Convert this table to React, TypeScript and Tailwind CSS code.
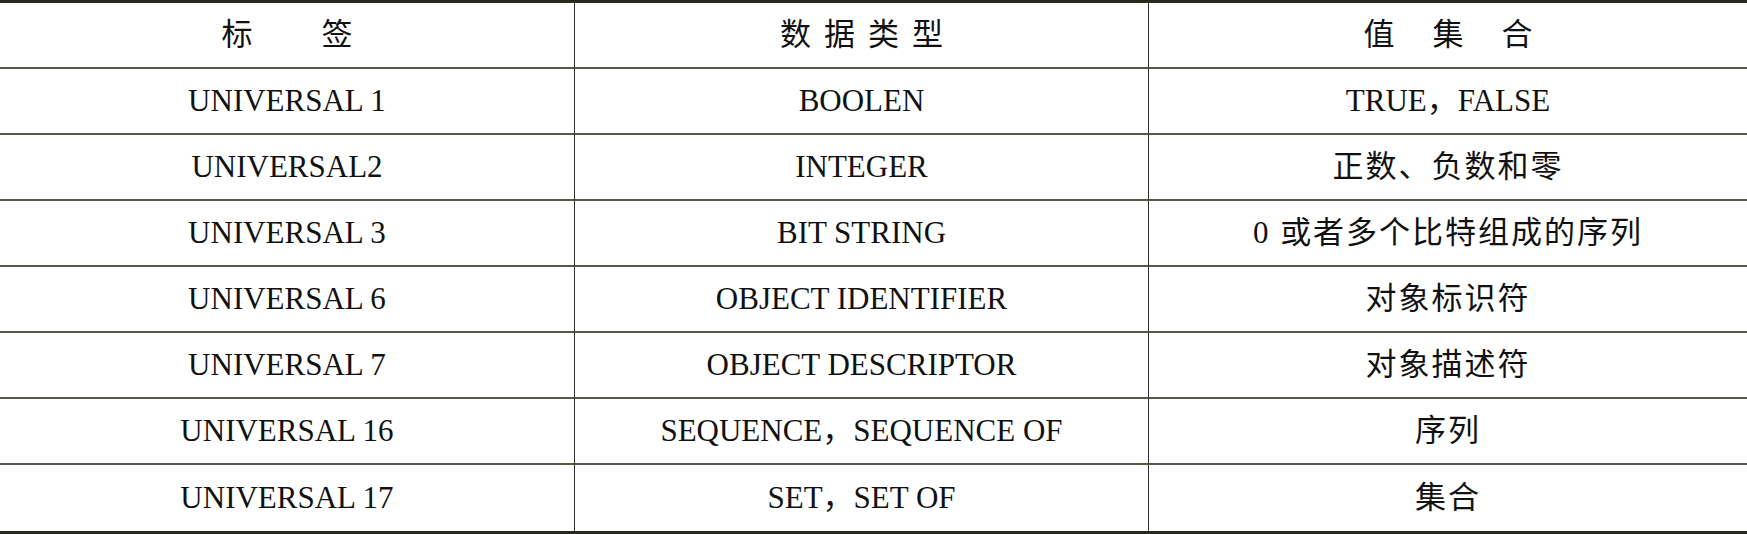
const ROWS: [string, string, string][] = [
  ['UNIVERSAL 1', 'BOOLEN', 'TRUE，FALSE'],
  ['UNIVERSAL2', 'INTEGER', '正数、负数和零'],
  ['UNIVERSAL 3', 'BIT STRING', '0 或者多个比特组成的序列'],
  ['UNIVERSAL 6', 'OBJECT IDENTIFIER', '对象标识符'],
  ['UNIVERSAL 7', 'OBJECT DESCRIPTOR', '对象描述符'],
  ['UNIVERSAL 16', 'SEQUENCE，SEQUENCE OF', '序列'],
  ['UNIVERSAL 17', 'SET，SET OF', '集合'],
]

const hasHan = (s: string) => /[\u4e00-\u9fff]/.test(s)

function Spread({ chars, gap }: { chars: string[]; gap: string }) {
  return (
    <span className={`flex items-center ${gap}`}>
      {chars.map((c) => (
        <span key={c}>{c}</span>
      ))}
    </span>
  )
}

export default function App() {
  return (
    <div className="h-[534px] w-[1747px] bg-white font-['Liberation_Serif','Noto_Sans_CJK_SC',serif] text-[31px] text-[#111111]">
      <div className="grid h-full grid-cols-[575px_574px_1fr] grid-rows-8 border-y-[3px] border-[#28281d]">
        <div className="flex items-center justify-center border-r border-b-2 border-r-[#2f2f27] border-b-[#56564a]">
          <Spread chars={['标', '签']} gap="gap-[69px]" />
        </div>
        <div className="flex items-center justify-center border-r border-b-2 border-r-[#2f2f27] border-b-[#56564a]">
          <Spread chars={['数', '据', '类', '型']} gap="gap-[13px]" />
        </div>
        <div className="flex items-center justify-center border-b-2 border-b-[#56564a]">
          <Spread chars={['值', '集', '合']} gap="gap-[38px]" />
        </div>
        {ROWS.map(([tag, type, values], i) => {
          const last = i === ROWS.length - 1
          const rowLine = last ? '' : 'border-b-2 border-b-[#56564a]'
          return [
            <div key={`${tag}-a`} className={`flex items-center justify-center border-r border-r-[#2f2f27] ${rowLine}`}>
              {tag}
            </div>,
            <div key={`${tag}-b`} className={`flex items-center justify-center border-r border-r-[#2f2f27] ${rowLine}`}>
              {type}
            </div>,
            <div key={`${tag}-c`} className={`flex items-center justify-center ${rowLine}`}>
              <span className={hasHan(values) ? 'tracking-[2px]' : ''}>{values}</span>
            </div>,
          ]
        })}
      </div>
    </div>
  )
}
